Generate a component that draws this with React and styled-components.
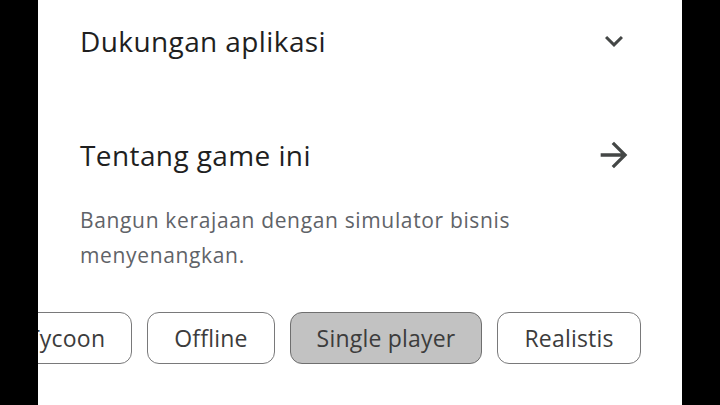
import React from 'react';
import styled, { createGlobalStyle } from 'styled-components';

const GlobalStyle = createGlobalStyle`
  html, body {
    margin: 0;
    padding: 0;
    background: #000;
  }
  body {
    font-family: "Open Sans", Roboto, sans-serif;
  }
`

const Screen = styled.div`
  width: 720px;
  height: 405px;
  display: flex;
  justify-content: center;
  background: #000;
`

const Sheet = styled.main`
  width: 644px;
  height: 405px;
  background: #fff;
  overflow: hidden;
  display: flex;
  flex-direction: column;
  padding: 0 48px 0 42px;
  box-sizing: border-box;
`

const SectionRow = styled.div`
  display: flex;
  align-items: center;
  justify-content: space-between;
  height: 48px;
  margin-top: ${props => props.top}px;
`

const SectionTitle = styled.h2`
  margin: 0;
  font-size: 28px;
  font-weight: 400;
  letter-spacing: 0.4px;
  color: #1f1f1f;
  line-height: 48px;
`

const IconBox = styled.span`
  width: 40px;
  height: 40px;
  display: flex;
  align-items: center;
  justify-content: center;
  color: #444746;
`

const Description = styled.p`
  margin: 24px 0 0;
  font-size: 21px;
  letter-spacing: 0.65px;
  line-height: 35px;
  color: #5f6368;
`

const ChipRow = styled.div`
  display: flex;
  gap: 15px;
  margin: 39px 0 0 -80px;
  white-space: nowrap;
`

const Chip = styled.span`
  flex: none;
  display: flex;
  align-items: center;
  height: 52px;
  padding: 0 26px;
  box-sizing: border-box;
  border: 1px solid ${props => props.selected ? '#6f6f6f' : '#79797a'};
  border-radius: 12px;
  background: ${props => props.selected ? '#c2c2c2' : '#fff'};
  color: #3c3c3c;
  font-size: 23px;
  letter-spacing: 0.2px;
`

const ChevronDown = () => (
  <svg width="36" height="36" viewBox="0 0 24 24" fill="currentColor">
    <path d="M16.59 8.59 12 13.17 7.41 8.59 6 10l6 6 6-6z" />
  </svg>
)

const ArrowForward = () => (
  <svg width="40" height="40" viewBox="0 0 24 24" fill="currentColor">
    <path d="M12 4l-1.41 1.41L16.17 11H4v2h12.17l-5.58 5.59L12 20l8-8z" />
  </svg>
)

const tags = ['Tycoon', 'Offline', 'Single player', 'Realistis']

export default function App() {
  return (
    <>
      <GlobalStyle />
      <Screen>
        <Sheet>
          <SectionRow top={17}>
            <SectionTitle>Dukungan aplikasi</SectionTitle>
            <IconBox><ChevronDown /></IconBox>
          </SectionRow>
          <SectionRow top={66}>
            <SectionTitle>Tentang game ini</SectionTitle>
            <IconBox><ArrowForward /></IconBox>
          </SectionRow>
          <Description>
            Bangun kerajaan dengan simulator bisnis menyenangkan.
          </Description>
          <ChipRow>
            {tags.map(tag => (
              <Chip key={tag} selected={tag === 'Single player'}>{tag}</Chip>
            ))}
          </ChipRow>
        </Sheet>
      </Screen>
    </>
  )
}
